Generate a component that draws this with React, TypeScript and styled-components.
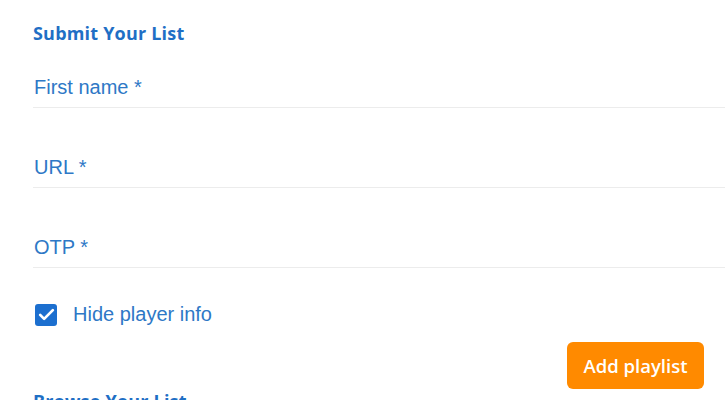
import React, { useState } from "react";
import styled, { createGlobalStyle } from "styled-components";

const GlobalStyle = createGlobalStyle`
  body {
    margin: 0;
    background: #ffffff;
    overflow: hidden;
  }
`;

const Page = styled.div`
  width: 725px;
  height: 400px;
  overflow: hidden;
  padding-left: 33px;
  box-sizing: border-box;
`;

const Heading = styled.h2`
  margin: 0;
  padding-top: 22px;
  font-family: "Open Sans", "DejaVu Sans", sans-serif;
  font-weight: 700;
  font-size: 18px;
  letter-spacing: 0.2px;
  line-height: 22px;
  color: #1f6fc5;
`;

const Field = styled.div`
  height: 80px;
  display: flex;
  align-items: flex-end;
  border-bottom: 1px solid #ececec;
  box-sizing: border-box;
  padding-bottom: 8px;
`;

const FirstField = styled(Field)`
  height: 64px;
`;

const Label = styled.label`
  font-family: "Liberation Sans", Arial, sans-serif;
  font-size: 20px;
  line-height: 24px;
  color: #2e78c6;
  padding-left: 1px;
`;

const CheckRow = styled.label`
  display: flex;
  align-items: center;
  gap: 16px;
  margin-top: 35px;
  padding-left: 2px;
  cursor: pointer;
`;

const Box = styled.span<{ $on: boolean }>`
  width: 22px;
  height: 22px;
  border-radius: 3px;
  background: ${(p) => (p.$on ? "#1c6fcf" : "#fff")};
  border: ${(p) => (p.$on ? "none" : "2px solid #1c6fcf")};
  display: flex;
  align-items: center;
  justify-content: center;
  box-sizing: border-box;
`;

const CheckText = styled.span`
  font-family: "Liberation Sans", Arial, sans-serif;
  font-size: 20px;
  color: #2e78c6;
`;

const ButtonRow = styled.div`
  display: flex;
  justify-content: flex-end;
  padding-right: 21px;
  margin-top: 16px;
`;

const Button = styled.button`
  width: 137px;
  height: 47px;
  border: none;
  border-radius: 6px;
  background: #ff8a00;
  color: #fff;
  font-family: "Open Sans", "DejaVu Sans", sans-serif;
  font-weight: 600;
  font-size: 18.5px;
  cursor: pointer;
`;

const SubHeading = styled(Heading)`
  padding-top: 1px;
`;

export default function App() {
  const [hide, setHide] = useState(true);
  return (
    <Page>
      <GlobalStyle />
      <Heading>Submit Your List</Heading>
      <FirstField>
        <Label>First name *</Label>
      </FirstField>
      <Field>
        <Label>URL *</Label>
      </Field>
      <Field>
        <Label>OTP *</Label>
      </Field>
      <CheckRow onClick={() => setHide(!hide)}>
        <Box $on={hide}>
          {hide && (
            <svg width="19" height="19" viewBox="0 0 24 24">
              <path d="M4 12.5l5 5L20 6.5" fill="none" stroke="#fff" strokeWidth="3.4" strokeLinecap="round" strokeLinejoin="round" />
            </svg>
          )}
        </Box>
        <CheckText>Hide player info</CheckText>
      </CheckRow>
      <ButtonRow>
        <Button>Add playlist</Button>
      </ButtonRow>
      <SubHeading>Browse Your List</SubHeading>
    </Page>
  );
}
